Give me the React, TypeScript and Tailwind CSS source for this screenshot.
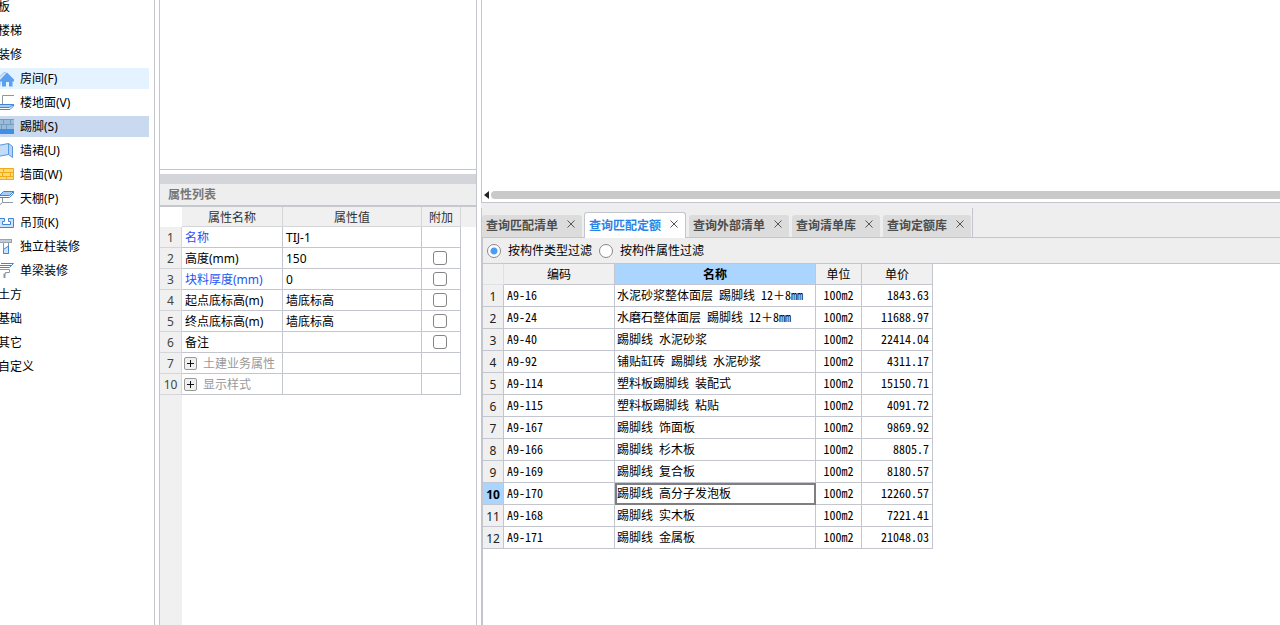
import type { ReactNode } from 'react';

type IconName = 'house' | 'floor' | 'skirting' | 'dado' | 'brick' | 'ceiling' | 'hung' | 'column' | 'beam';

const shapes: Record<IconName, ReactNode> = {
  house: (
    <>
      <path d="M0.500 7L6.500 1L9 3.500L2 10.500V14.500H0.500Z" fill="#d3e6fb" stroke="#8dbcf0" />
      <path d="M9 1.500L16.500 9V10.500H14.500V15.500H11V11H8V15.500H4V10.500H2V9Z" fill="#5b9ff0" />
    </>
  ),
  floor: (
    <>
      <path d="M4.500 9.500V0.500H16" fill="none" stroke="#8a96a3" />
      <path d="M0 12.500V9.500H15.500L11.500 12.500Z" fill="#a9cdf6" stroke="#3f86d8" />
      <path d="M0 14.500H12L15.500 11V9.500" fill="none" stroke="#3f86d8" />
    </>
  ),
  skirting: (
    <>
      <rect width="16" height="15" fill="#9dbbd6" />
      <path d="M0 0.500H16M0 5.500H16M5.500 1V5M12.500 1V5M8.500 6V10M3.500 6V10" stroke="#6f9fc2" />
      <rect y="10" width="16" height="5" fill="#3d8fe8" />
    </>
  ),
  dado: (
    <>
      <path d="M0 2.500L10.500 0.500V11.500L0 13.500Z" fill="#c3dcfa" stroke="#5b97dd" />
      <path d="M10.500 0.500L14.500 3.500V14.500L10.500 11.500Z" fill="#b5d4f8" stroke="#5b97dd" />
    </>
  ),
  brick: (
    <>
      <rect y="1" width="16" height="12" fill="#ffd978" />
      <path d="M0 1.500H15.500V12.500H0M0 5.500H15.500M0 9.500H15.500M5.500 1V5M12.500 5V9M4.500 5V9M8.500 9V13" fill="none" stroke="#f2ab18" />
    </>
  ),
  ceiling: (
    <>
      <path d="M5.500 0.500H15.500L11.500 4.500H1.500Z" fill="#a9cdf6" stroke="#3f86d8" />
      <path d="M1.500 4.500V6.500H11.500L15.500 2.500V0.500" fill="none" stroke="#3f86d8" />
      <path d="M4.500 7V11.500H15M4.500 11.500L1 14.500" fill="none" stroke="#8a96a3" />
    </>
  ),
  hung: (
    <path d="M0 3.500H6.500V6.500H4.500V9.500H12.500V6.500H10.500V3.500H15.500V12.500H0Z" fill="#cfe3fb" stroke="#3f86d8" />
  ),
  column: (
    <>
      <rect x="1.500" y="0.500" width="12" height="3" fill="#c3cbd2" stroke="#98a4af" />
      <path d="M5.500 4V14.500H10.500V4" fill="#fff" stroke="#8a96a3" />
      <path d="M5.500 10.500L10.500 7V14.500H5.500Z" fill="#cfe3fb" stroke="#3f86d8" />
    </>
  ),
  beam: (
    <>
      <path d="M3 0.500H15.500L11.500 4.500H0M1 2.500H13" fill="none" stroke="#3f86d8" />
      <path d="M1 6.500H11.500V9.500H7.500V11" fill="none" stroke="#8a96a3" />
      <path d="M6.500 10.500V15" stroke="#8a96a3" strokeWidth="2" />
    </>
  ),
};

function Icon({ name }: { name: IconName }) {
  return (
    <svg viewBox="0 0 16 16" className="size-4 shrink-0" aria-hidden="true">
      {shapes[name]}
    </svg>
  );
}

const nav: { label: string; icon?: IconName; state?: 'hover' | 'active' }[] = [
  { label: '板' },
  { label: '楼梯' },
  { label: '装修' },
  { label: '房间(F)', icon: 'house', state: 'hover' },
  { label: '楼地面(V)', icon: 'floor' },
  { label: '踢脚(S)', icon: 'skirting', state: 'active' },
  { label: '墙裙(U)', icon: 'dado' },
  { label: '墙面(W)', icon: 'brick' },
  { label: '天棚(P)', icon: 'ceiling' },
  { label: '吊顶(K)', icon: 'hung' },
  { label: '独立柱装修', icon: 'column' },
  { label: '单梁装修', icon: 'beam' },
  { label: '土方' },
  { label: '基础' },
  { label: '其它' },
  { label: '自定义' },
];

const props: { no: number; name: string; value?: string; kind?: 'link' | 'group'; check?: boolean }[] = [
  { no: 1, name: '名称', value: 'TIJ-1', kind: 'link' },
  { no: 2, name: '高度(mm)', value: '150', check: true },
  { no: 3, name: '块料厚度(mm)', value: '0', kind: 'link', check: true },
  { no: 4, name: '起点底标高(m)', value: '墙底标高', check: true },
  { no: 5, name: '终点底标高(m)', value: '墙底标高', check: true },
  { no: 6, name: '备注', check: true },
  { no: 7, name: '土建业务属性', kind: 'group' },
  { no: 10, name: '显示样式', kind: 'group' },
];

const tabs = ['查询匹配清单', '查询匹配定额', '查询外部清单', '查询清单库', '查询定额库'];

const quotas = [
  ['A9-16', '水泥砂浆整体面层 踢脚线 12＋8mm', '1843.63'],
  ['A9-24', '水磨石整体面层 踢脚线 12＋8mm', '11688.97'],
  ['A9-40', '踢脚线 水泥砂浆', '22414.04'],
  ['A9-92', '铺贴缸砖 踢脚线 水泥砂浆', '4311.17'],
  ['A9-114', '塑料板踢脚线 装配式', '15150.71'],
  ['A9-115', '塑料板踢脚线 粘贴', '4091.72'],
  ['A9-167', '踢脚线 饰面板', '9869.92'],
  ['A9-166', '踢脚线 杉木板', '8805.7'],
  ['A9-169', '踢脚线 复合板', '8180.57'],
  ['A9-170', '踢脚线 高分子发泡板', '12260.57'],
  ['A9-168', '踢脚线 实木板', '7221.41'],
  ['A9-171', '踢脚线 金属板', '21048.03'],
];

const SELECTED = 9;

function Sidebar() {
  return (
    <nav className="w-[155px] shrink-0 overflow-hidden border-r border-[#c3c6cf]">
      <ul className="-mt-1 -ml-0.5 flex flex-col gap-[3px]">
        {nav.map((item) => (
          <li key={item.label} className="pr-[5px]">
            <a
              href="#"
              className={`flex h-[21px] items-center gap-1.5 ${
                item.state === 'active' ? 'bg-[#c9daf0]' : item.state === 'hover' ? 'bg-[#e5f2ff]' : ''
              }`}
            >
              {item.icon && <Icon name={item.icon} />}
              {item.label}
            </a>
          </li>
        ))}
      </ul>
    </nav>
  );
}

function PropertyPanel() {
  const box = 'border-r border-b border-[#c3c6cf] p-0';
  const cell = `${box} pt-0.5`;
  const head = 'border-r border-b border-[#d4d6da] bg-[#f0f0f0] p-0 pt-0.5 font-normal text-[#333]';
  return (
    <section className="flex w-[318px] shrink-0 flex-col border-x border-[#c3c6cf]">
      <div className="h-[170px] shrink-0 border-b border-[#c3c6cf]" />
      <div className="mt-1 h-[10px] shrink-0 bg-[#d3d5da]" />
      <h2 className="h-[23px] shrink-0 border-b-2 border-[#c5c8cd] bg-[#eee] pl-2 leading-[21px] font-bold text-[#777]">
        属性列表
      </h2>
      <table className="w-full table-fixed border-separate border-spacing-0">
        <colgroup>
          <col className="w-[22px]" />
          <col className="w-[101px]" />
          <col className="w-[139px]" />
          <col className="w-[39px]" />
          <col />
        </colgroup>
        <thead>
          <tr className="h-5">
            <th className="p-0" />
            <th className={head}>属性名称</th>
            <th className={head}>属性值</th>
            <th className={head}>附加</th>
            <th className="bg-[#f0f0f0] p-0" />
          </tr>
        </thead>
        <tbody>
          {props.map((row) => (
            <tr key={row.no} className="h-[21px]">
              <th className="border-r border-b border-[#d4d6da] bg-[#f0f0f0] p-0 pt-0.5 font-normal text-[#444]">
                {row.no}
              </th>
              <td className={cell}>
                {row.kind === 'group' ? (
                  <div className="flex items-center gap-1.5 pl-0.5 text-[#999]">
                    <button
                      type="button"
                      aria-label={`展开${row.name}`}
                      className="mb-0.5 grid size-[13px] place-items-center rounded-[2px] border border-[#999] bg-[#f0f0f0]"
                    >
                      <svg viewBox="0 0 7 7" className="size-[7px]">
                        <path d="M3.500 0V7M0 3.500H7" stroke="#111" />
                      </svg>
                    </button>
                    {row.name}
                  </div>
                ) : (
                  <div className={`pl-[3px] ${row.kind === 'link' ? 'text-[#1a55f5]' : ''}`}>{row.name}</div>
                )}
              </td>
              <td className={`${cell} pl-[3px]`}>{row.value}</td>
              <td className={box}>
                {row.check && (
                  <input
                    type="checkbox"
                    aria-label={`附加${row.name}`}
                    className="ml-[11px] block size-[14px] appearance-none rounded-[3px] border border-[#858585] bg-white"
                  />
                )}
              </td>
              <td className="p-0" />
            </tr>
          ))}
        </tbody>
      </table>
      <div className="w-[22px] flex-1 bg-[#f0f0f0]" />
    </section>
  );
}

function Tabs() {
  return (
    <div className="flex h-[29px] w-[491px] items-end gap-[3px] border-r border-[#c3c6cf]" role="tablist">
      {tabs.map((tab, i) => {
        const active = i === 1;
        return (
          <div
            key={tab}
            className={`flex items-center gap-[9px] rounded-t-[3px] pr-[7px] pl-1 font-bold ${
              active
                ? '-mb-px -ml-px h-[26px] border border-b-0 border-[#c3c6cf] bg-white text-[#2a84e8]'
                : 'h-[22px] bg-[#dcdcdc] text-[#4d4d4d]'
            }`}
          >
            <button type="button" role="tab" aria-selected={active} className="whitespace-nowrap">
              {tab}
            </button>
            <button type="button" aria-label={`关闭${tab}`} className="mb-1">
              <svg viewBox="0 0 8 8" className="size-2">
                <path d="M0.500 0.500L7.500 7.500M7.500 0.500L0.500 7.500" stroke="#555" />
              </svg>
            </button>
          </div>
        );
      })}
    </div>
  );
}

function Filters() {
  return (
    <div className="flex h-[25px] items-center gap-[7px] border-l-2 border-[#c3c6cf] pl-1">
      {['按构件类型过滤', '按构件属性过滤'].map((label, i) => (
        <label key={label} className="flex items-center gap-[7px]">
          <input
            type="radio"
            name="filter"
            defaultChecked={i === 0}
            className="size-[14px] appearance-none rounded-full border border-[#888] bg-white checked:bg-[radial-gradient(circle,#4a9cf8_3px,#fff_4px)]"
          />
          {label}
        </label>
      ))}
    </div>
  );
}

function QuotaTable() {
  const cell = "border-r border-b border-[#c3c6cf] p-0 pb-0.5 font-['Noto_Sans_Mono_CJK_SC','Noto_Sans_CJK_SC',monospace]";
  const head = 'border-r border-b border-[#c3c6cf] p-0 pt-0.5';
  return (
    <div className="flex-1 border-t border-l-2 border-[#c3c6cf] bg-white">
      <table className="w-[450px] table-fixed border-separate border-spacing-0">
        <colgroup>
          <col className="w-[21px]" />
          <col className="w-[111px]" />
          <col className="w-[201px]" />
          <col className="w-[46px]" />
          <col className="w-[71px]" />
        </colgroup>
        <thead>
          <tr className="h-[21px] bg-[#f0f0f0]">
            <th className="border-r border-b border-[#dfe1e5] p-0" />
            <th className={`${head} font-normal`}>编码</th>
            <th className={`${head} bg-[#a9d5ff] font-bold`}>名称</th>
            <th className={`${head} font-normal`}>单位</th>
            <th className={`${head} font-normal`}>单价</th>
          </tr>
        </thead>
        <tbody>
          {quotas.map(([code, name, price], i) => (
            <tr key={code} className="h-[22px]">
              <th
                className={`border-r border-b border-[#c3c6cf] p-0 pt-0.5 ${
                  i === SELECTED ? 'bg-[#a9d5ff] font-bold' : 'bg-[#f0f0f0] font-normal text-[#222]'
                }`}
              >
                {i + 1}
              </th>
              <td className={`${cell} pl-[3px]`}>{code}</td>
              <td
                className={`${cell} pl-0.5 whitespace-nowrap ${
                  i === SELECTED ? 'outline-2 -outline-offset-2 outline-[#7f7f7f]' : ''
                }`}
              >
                {name}
              </td>
              <td className={`${cell} text-center`}>100m2</td>
              <td className={`${cell} pr-[3px] text-right`}>{price}</td>
            </tr>
          ))}
        </tbody>
      </table>
    </div>
  );
}

export default function App() {
  return (
    <main className="flex h-screen gap-1 overflow-hidden bg-white font-['Noto_Sans','Noto_Sans_CJK_SC',sans-serif] text-[12px] leading-4 text-black">
      <Sidebar />
      <PropertyPanel />
      <section className="flex min-w-0 flex-1 flex-col bg-[#eee]">
        <div className="flex h-[203px] shrink-0 flex-col justify-end border-b border-l border-[#c3c6cf] bg-white pb-[3px]">
          <div className="flex items-center gap-0.5 pl-0.5">
            <svg viewBox="0 0 5 8" className="h-2 w-[5px]" aria-hidden="true">
              <path d="M5 0V8L0 4Z" fill="#222" />
            </svg>
            <div className="h-2 flex-1 rounded-l-full bg-[#c9c9c9]" />
          </div>
        </div>
        <div className="mt-[5px] border-b border-l border-[#c3c6cf]">
          <Tabs />
        </div>
        <Filters />
        <QuotaTable />
      </section>
    </main>
  );
}
